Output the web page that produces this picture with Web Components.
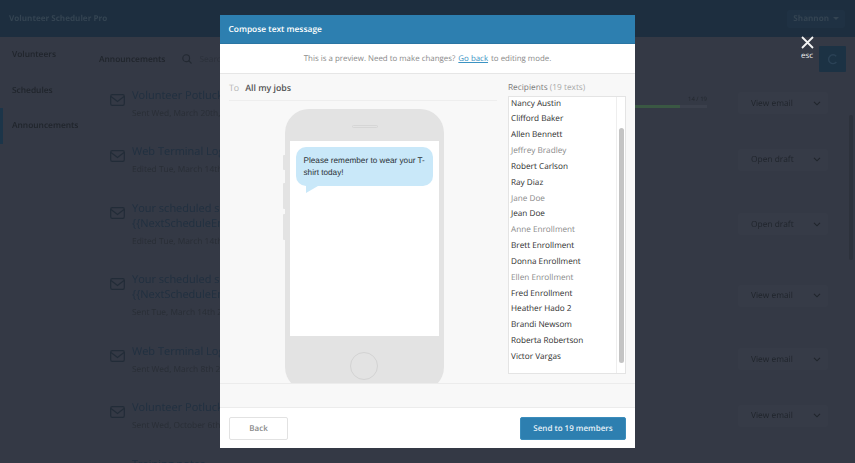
<!doctype html>
<html lang="en">
<head>
<meta charset="UTF-8" />
<title>Volunteer Scheduler Pro</title>
<style>
	html, body { margin: 0; height: 463px; overflow: hidden; background: #343945; font-family: "Open Sans", sans-serif; text-rendering: geometricPrecision; }
</style>
<script>
	function define(name, css, html) {
		customElements.define(name, class extends HTMLElement {
			constructor() {
				super();
				this.attachShadow({ mode: 'open' });
			}
			connectedCallback() {
				this.shadowRoot.innerHTML = `<style>${css}</style>${typeof html === 'function' ? html(this) : html}`;
			}
		});
	}

	const envelope = `<svg width="15" height="12" viewBox="0 0 15 12" fill="none" stroke="#222c38" stroke-width="1.2"><rect x=".7" y=".7" width="13.6" height="10.6" rx="1.6"/><path d="M1 2.6 7.5 7.4 14 2.6"/></svg>`;

	define('app-header', `
		:host { display: flex; align-items: center; justify-content: space-between; height: 37px; padding: 0 9px; background: #1d2e3f; box-sizing: border-box; }
		.brand { font-size: 8.1px; font-weight: 700; color: #344452; }
		.user { display: flex; align-items: center; gap: 4px; height: 18px; padding: 0 6px; margin-right: 1px; background: #1f3143; border-radius: 2px; font-size: 8.1px; font-weight: 700; color: #344452; }
		.user i { border: 3px solid transparent; border-top-color: #344452; border-bottom: 0; }
	`, `<span class="brand">Volunteer Scheduler Pro</span><span class="user">Shannon <i></i></span>`);

	define('side-nav', `
		:host { display: block; width: 89px; flex: none; }
		::slotted(*) { display: block; height: 35.5px; box-sizing: border-box; padding-top: 1px; line-height: 34.5px; padding-left: 12px; font-size: 8.4px; font-weight: 600; color: #20252c; }
		::slotted(.active) { box-shadow: inset 3px 0 #1c3549; }
	`, `<slot></slot>`);

	define('toolbar-row', `
		:host { display: flex; align-items: center; height: 44px; padding: 0 9px 0 10px; box-sizing: border-box; }
		h2 { margin: 0; font-size: 8.4px; font-weight: 600; color: #20252c; }
		.search { display: flex; align-items: center; gap: 7px; margin-left: 17px; color: #2c313b; font-size: 8.4px; }
		.add { margin-left: auto; width: 27px; height: 26px; background: #1c3244; border-radius: 1px; display: grid; place-items: center; }
	`, `<h2>Announcements</h2>
		<span class="search"><svg width="10" height="10" viewBox="0 0 10 10" fill="none" stroke="#232932" stroke-width="1.1"><circle cx="4.2" cy="4.2" r="3.4"/><path d="M6.7 6.7 9.5 9.5"/></svg>Search</span>
		<span class="add"><svg width="11" height="11" viewBox="0 0 11 11" fill="none" stroke="#2b4256" stroke-width="1.4"><path d="M9.2 2.2A4.4 4.4 0 1 0 9.4 8"/></svg></span>`);

	define('announcement-row', `
		:host { display: flex; box-sizing: border-box; padding: 0 27px 0 21px; }
		.icon { width: 22px; flex: none; padding-top: 2px; }
		.text { flex: 1; min-width: 0; }
		.title { font-size: 11px; line-height: 15px; color: #213040; padding-top: 1px; white-space: nowrap; }
		.sub { font-size: 8.4px; line-height: 14px; margin-top: 4px; color: #292e36; white-space: nowrap; }
		.progress { width: 72px; flex: none; margin-right: 31px; padding-top: 8px; }
		.progress small { display: block; text-align: right; font-size: 6px; line-height: 8px; color: #23282f; }
		.bar { height: 3px; margin-top: 2px; background: #3b404c; }
		.bar div { width: 45px; height: 3px; background: #3a5843; }
		.action { display: flex; align-items: center; justify-content: space-between; width: 90px; height: 22px; margin-top: 5.5px; flex: none; padding: 0 7px 0 13px; box-sizing: border-box; border-radius: 2px; background: #363b47; font-size: 8.4px; color: #20252c; }
		:host(.tall) .action { margin-top: 13.5px; }
	`, (el) => `
		<div class="icon">${envelope}</div>
		<div class="text"><div class="title"><slot></slot></div><div class="sub">${el.getAttribute('meta') || ''}</div></div>
		${el.hasAttribute('sent') ? `<div class="progress"><small>${el.getAttribute('sent')}</small><div class="bar"><div></div></div></div>` : ''}
		${el.hasAttribute('action') ? `<div class="action">${el.getAttribute('action')}<svg width="8" height="5" viewBox="0 0 8 5" fill="none" stroke="#20252c" stroke-width="1.1"><path d="M1 .8 4 3.8 7 .8"/></svg></div>` : ''}`);

	define('app-backdrop', `
		:host { display: flex; flex-direction: column; height: 463px; overflow: hidden; filter: blur(.7px); }
		.main { display: flex; flex: 1; min-height: 0; }
		.content { flex: 1; min-width: 0; }
		.rows { display: flex; flex-direction: column; padding-top: 5.5px; }
		.scroll { position: absolute; right: 2px; top: 115px; width: 4px; height: 145px; background: #2d323c; border-radius: 2px; }
		::slotted(*) { height: 56.5px; flex: none; }
		::slotted(.tall) { height: 71.5px; }
	`, `<app-header></app-header>
		<div class="main">
			<side-nav><span>Volunteers</span><span>Schedules</span><span class="active">Announcements</span></side-nav>
			<div class="content">
				<toolbar-row></toolbar-row>
				<div class="rows"><slot></slot></div>
			</div>
		</div>
		<div class="scroll"></div>`);

	define('phone-preview', `
		:host { display: block; width: 161px; height: 274px; margin: 0 auto; overflow: hidden; position: relative; }
		.phone { height: 282px; margin-left: 2px; box-sizing: border-box; padding: 32px 5px 0; background: #e3e3e3; border-radius: 24px; }
		.phone::before { content: ""; position: absolute; width: 26px; height: 3px; margin: -16px 0 0 62px; border: 1px solid #d6d6d6; border-radius: 3px; box-sizing: border-box; }
		.key { position: absolute; left: 0; width: 2px; background: #e3e3e3; border-radius: 1px 0 0 1px; }
		.screen { height: 195px; padding: 6px; box-sizing: border-box; background: #fff; }
		.bubble { position: relative; width: 137px; height: 39px; padding: 8px 4px 8px 8px; box-sizing: border-box; background: #c9e8f9; border-radius: 10px; font: 8.2px/11.5px "Liberation Sans", Arial, sans-serif; color: #2c3238; }
		.bubble::after { content: ""; position: absolute; left: 10px; top: 39px; border-right: 12px solid transparent; border-top: 7px solid #c9e8f9; }
		.home { width: 28px; height: 28px; margin: 16px auto 0; border: 1px solid #d3d3d3; border-radius: 50%; box-sizing: border-box; }
	`, `<span class="key" style="top:46px;height:15px"></span><span class="key" style="top:74px;height:26px"></span><span class="key" style="top:105px;height:26px"></span>
		<div class="phone"><div class="screen"><div class="bubble"><slot></slot></div></div><div class="home"></div></div>`);

	define('recipient-list', `
		:host { display: block; width: 118px; }
		.head { font-size: 8.3px; line-height: 12px; height: 14px; color: #7c7c7c; }
		.head span { color: #aaa; }
		.box { position: relative; height: 278px; padding-top: .5px; box-sizing: border-box; background: #fff; border: 1px solid #e4e4e4; overflow: hidden; }
		.track { position: absolute; right: 0; top: 0; bottom: 0; width: 8px; border-left: 1px solid #eee; }
		.thumb { position: absolute; right: 1px; top: 31px; width: 5px; height: 235px; border-radius: 3px; background: #c4c4c4; }
		::slotted(div) { height: 15.85px; line-height: 12px; padding-left: 2px; font-size: 8.2px; color: #2e2e2e; white-space: nowrap; }
		::slotted(.off) { color: #8a8a8a; }
	`, `<div class="head">Recipients <span>(19 texts)</span></div>
		<div class="box"><slot></slot><div class="track"></div><div class="thumb"></div></div>`);

	define('compose-modal', `
		:host { position: absolute; left: 220px; top: 15px; width: 415px; height: 433px; display: flex; flex-direction: column; background: #fff; color: #444; }
		header { height: 29px; flex: none; display: flex; align-items: center; padding: 0 8.5px; background: #2d7fb0; border-bottom: 1px solid #2a75a3; box-sizing: border-box; color: #fff; font-size: 8.4px; font-weight: 600; }
		.note { height: 30px; flex: none; display: flex; align-items: center; justify-content: center; background: #fff; border-bottom: 1px solid #e6e6e6; font-size: 7.9px; color: #8a8a8a; box-sizing: border-box; }
		.note a { color: #3b93c3; text-decoration: underline; margin: 0 3px; }
		.body { height: 310px; flex: none; display: flex; background: #f8f8f8; padding: 0 9px; box-sizing: border-box; overflow: hidden; }
		.left { flex: 1; min-width: 0; margin-right: 11px; }
		.to { height: 26px; line-height: 28px; margin-bottom: 8px; border-bottom: 1px solid #eee; font-size: 8.8px; font-weight: 600; color: #555; }
		.to span { color: #b5b5b5; font-weight: 400; margin-right: 6px; }
		.right { padding-top: 8px; }
		.gap { height: 25px; flex: none; background: #f8f8f8; border-top: 1px solid #ececec; border-bottom: 1px solid #ececec; box-sizing: border-box; margin-top: -1px; }
		footer { flex: 1; display: flex; align-items: center; justify-content: space-between; padding: 0 9px; }
		button { font: 600 8px "Open Sans", sans-serif; text-rendering: geometricPrecision; border-radius: 2px; box-sizing: border-box; height: 23px; }
		.back { width: 59px; background: #fff; border: 1px solid #e2e2e2; color: #8a8a8a; }
		.send { width: 106px; background: #2d7fb0; border: 1px solid #3b8dbc; color: #e6f2f8; }
	`, `<header>Compose text message</header>
		<div class="note">This is a preview. Need to make changes?<a>Go back</a>to editing mode.</div>
		<div class="body">
			<div class="left">
				<div class="to"><span>To</span>All my jobs</div>
				<phone-preview>Please remember to wear your T-shirt today!</phone-preview>
			</div>
			<div class="right"><slot></slot></div>
		</div>
		<div class="gap"></div>
		<footer><button class="back">Back</button><button class="send">Send to 19 members</button></footer>`);

	define('close-hint', `
		:host { position: absolute; left: 797px; top: 36px; width: 20px; display: flex; flex-direction: column; align-items: center; color: #f2f2f2; font-size: 8px; line-height: 10px; }
		svg { display: block; margin-bottom: 2px; }
	`, `<svg width="13" height="13" viewBox="0 0 13 13" stroke="#f4f4f4" stroke-width="1.8"><path d="M1 1 12 12M12 1 1 12"/></svg>esc`);
</script>
</head>
<body>
	<app-backdrop>
		<announcement-row meta="Sent Wed, March 20th, 2019" action="View email" sent="14 / 19">Volunteer Potluck</announcement-row>
		<announcement-row meta="Edited Tue, March 14th 2017" action="Open draft">Web Terminal Login</announcement-row>
		<announcement-row class="tall" meta="Edited Tue, March 14th 2017" action="Open draft">Your scheduled shift<br />{{NextScheduleEndTime}}</announcement-row>
		<announcement-row class="tall" meta="Sent Tue, March 14th 2017" action="View email">Your scheduled shift<br />{{NextScheduleEndTime}}</announcement-row>
		<announcement-row meta="Sent Wed, March 8th 2017" action="View email">Web Terminal Login</announcement-row>
		<announcement-row meta="Sent Wed, October 6th 2016" action="View email">Volunteer Potluck</announcement-row>
		<announcement-row>Training notes</announcement-row>
	</app-backdrop>
	<compose-modal>
		<recipient-list>
			<div>Nancy Austin</div>
			<div>Clifford Baker</div>
			<div>Allen Bennett</div>
			<div class="off">Jeffrey Bradley</div>
			<div>Robert Carlson</div>
			<div>Ray Diaz</div>
			<div class="off">Jane Doe</div>
			<div>Jean Doe</div>
			<div class="off">Anne Enrollment</div>
			<div>Brett Enrollment</div>
			<div>Donna Enrollment</div>
			<div class="off">Ellen Enrollment</div>
			<div>Fred Enrollment</div>
			<div>Heather Hado 2</div>
			<div>Brandi Newsom</div>
			<div>Roberta Robertson</div>
			<div>Victor Vargas</div>
		</recipient-list>
	</compose-modal>
	<close-hint></close-hint>
</body>
</html>
